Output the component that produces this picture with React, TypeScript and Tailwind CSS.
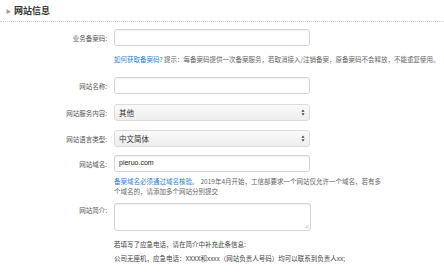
export default function App() {
  const font = { fontFamily: '"Noto Sans CJK SC", "Liberation Sans", sans-serif' };
  const label = "w-[109px] shrink-0 text-right text-[6.5px] leading-[10px] text-[#555] pr-[2px]";
  const field =
    "ml-[5px] w-[196px] h-[17px] rounded-[3px] border border-[#d4d4d4] bg-white shadow-[inset_0_1px_1px_rgba(0,0,0,0.06)]";
  const select =
    "ml-[5px] w-[196px] h-[17px] rounded-[3px] border border-[#dcdcdc] bg-gradient-to-b from-[#fafafa] to-[#eeeeee] flex items-center justify-between px-[4px]";

  return (
    <div className="w-[444px] h-[272px] bg-white overflow-hidden" style={font}>
      {/* header */}
      <div className="h-[22px] flex items-center border-b border-dotted border-[#cfcfcf]">
        <span className="ml-[6px] text-[5px] text-[#999]">▶</span>
        <span className="ml-[3px] text-[9px] font-bold text-[#333]">网站信息</span>
      </div>

      <div className="pt-[7px]">
        {/* 业务备案码 */}
        <div className="flex items-center">
          <div className={label}>业务备案码:</div>
          <div className={field} />
        </div>
        <div className="mt-[8px] ml-[114px] text-[6.5px] leading-[10px] text-[#666] whitespace-nowrap">
          <span className="text-[#2f7fcf]">如何获取备案码?</span> 提示：每备案码提供一次备案服务，若取消接入/注销备案，原备案码不会释放，不能重复使用。
        </div>

        {/* 网站名称 */}
        <div className="mt-[13px] flex items-center">
          <div className={label}>网站名称:</div>
          <div className={field} />
        </div>

        {/* 网站服务内容 */}
        <div className="mt-[10px] flex items-center">
          <div className={label}>网站服务内容:</div>
          <div className={select}>
            <span className="text-[7.5px] text-[#333]">其他</span>
            <Arrows />
          </div>
        </div>

        {/* 网站语言类型 */}
        <div className="mt-[9px] flex items-center">
          <div className={label}>网站语言类型:</div>
          <div className={select}>
            <span className="text-[7.5px] text-[#333]">中文简体</span>
            <Arrows />
          </div>
        </div>

        {/* 网站域名 */}
        <div className="mt-[8px] flex items-center">
          <div className={label}>网站域名:</div>
          <div className={field + " flex items-center px-[4px]"}>
            <span className="text-[7px] text-[#222]" style={{ fontFamily: '"Liberation Sans", sans-serif' }}>
              pieruo.com
            </span>
          </div>
        </div>
        <div className="mt-[4px] ml-[114px] text-[6.5px] leading-[10px] text-[#666] whitespace-nowrap">
          <div>
            <span className="text-[#2f7fcf]">备案域名必须通过域名核验。</span>
            <span className="ml-[2px]">2019年4月开始，工信部要求一个网站仅允许一个域名，若有多</span>
          </div>
          <div>个域名的，请添加多个网站分别提交</div>
        </div>

        {/* 网站简介 */}
        <div className="mt-[7px] flex items-start">
          <div className={label + " mt-[2px]"}>网站简介:</div>
          <div className="relative ml-[5px] w-[197px] h-[28px] rounded-[3px] border border-[#d4d4d4] bg-white shadow-[inset_0_1px_1px_rgba(0,0,0,0.06)]">
            <svg className="absolute right-[1px] bottom-[1px]" width="5" height="5" viewBox="0 0 5 5">
              <path d="M4.5 1 L1 4.5 M4.5 3 L3 4.5" stroke="#999" strokeWidth="0.6" />
            </svg>
          </div>
        </div>
        <div className="mt-[8px] ml-[114px] text-[6.5px] leading-[10px] text-[#444] whitespace-nowrap">
          若填写了应急电话，请在简介中补充此条信息:
        </div>
        <div className="mt-[4px] ml-[114px] text-[6.5px] leading-[10px] text-[#444] whitespace-nowrap">
          公司无座机，应急电话：XXXX和xxxx（网站负责人号码）均可以联系到负责人xx;
        </div>
      </div>
    </div>
  );
}

function Arrows() {
  return (
    <svg width="4" height="7" viewBox="0 0 4 7">
      <path d="M2 0.5 L3.6 2.8 H0.4 Z M2 6.5 L3.6 4.2 H0.4 Z" fill="#444" />
    </svg>
  );
}
